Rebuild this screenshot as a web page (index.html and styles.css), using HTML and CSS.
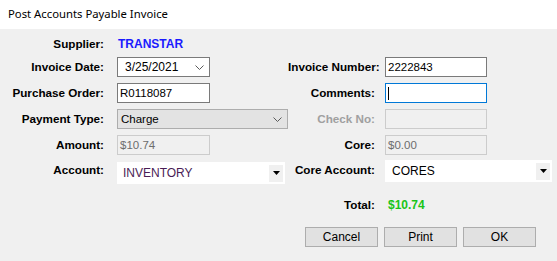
FILE: index.html
```html
<!DOCTYPE html>
<html lang="en">
<head>
    <meta charset="UTF-8">
    <title>Post Accounts Payable Invoice</title>
    <link rel="stylesheet" href="styles.css">
</head>
<body>
    <div class="window">
        <div class="titlebar">Post Accounts Payable Invoice</div>

        <div class="dialog">
            <div class="form-grid">
                <span class="lbl">Supplier:</span>
                <span class="supplier">TRANSTAR</span>
                <span></span>
                <span></span>

                <span class="lbl">Invoice Date:</span>
                <div class="field date-pick w-short">
                    <span class="val">3/25/2021</span>
                    <svg class="chev" width="9" height="5" viewBox="0 0 9 5"><path d="M0.5 0.5 L4.5 4.5 L8.5 0.5" fill="none" stroke="#5a5a5a" stroke-width="1"/></svg>
                </div>
                <span class="lbl lbl-right">Invoice Number:</span>
                <div class="field text-box w-right"><span class="val">2222843</span></div>

                <span class="lbl">Purchase Order:</span>
                <div class="field text-box w-short"><span class="val">R0118087</span></div>
                <span class="lbl lbl-right">Comments:</span>
                <div class="field text-box focused w-right"><span class="caret"></span></div>

                <span class="lbl">Payment Type:</span>
                <div class="field drop-list">
                    <span class="val">Charge</span>
                    <svg class="chev" width="9" height="5" viewBox="0 0 9 5"><path d="M0.5 0.5 L4.5 4.5 L8.5 0.5" fill="none" stroke="#5a5a5a" stroke-width="1"/></svg>
                </div>
                <span class="lbl lbl-right disabled-lbl">Check No:</span>
                <div class="field text-box disabled w-right"></div>

                <span class="lbl">Amount:</span>
                <div class="field text-box disabled w-short"><span class="val">$10.74</span></div>
                <span class="lbl lbl-right">Core:</span>
                <div class="field text-box disabled w-right"><span class="val">$0.00</span></div>

                <span class="lbl">Account:</span>
                <div class="field flat-combo account-combo">
                    <span class="val account-val">INVENTORY</span>
                    <span class="drop-btn"><svg width="7" height="4" viewBox="0 0 7 4"><path d="M0 0 H7 L3.5 4 Z" fill="#000"/></svg></span>
                </div>
                <span class="lbl lbl-right">Core Account:</span>
                <div class="field flat-combo core-combo">
                    <span class="val">CORES</span>
                    <span class="drop-btn"><svg width="7" height="4" viewBox="0 0 7 4"><path d="M0 0 H7 L3.5 4 Z" fill="#000"/></svg></span>
                </div>

                <span></span>
                <span></span>
                <span class="lbl lbl-right total-lbl">Total:</span>
                <span class="total">$10.74</span>
            </div>

            <div class="buttons">
                <button class="btn">Cancel</button>
                <button class="btn">Print</button>
                <button class="btn">OK</button>
            </div>
        </div>
    </div>
</body>
</html>
```

FILE: styles.css
```css
body {
    margin: 0;
    background-color: #f0f0f0;
    font-family: "Liberation Sans", Arial, sans-serif;
    font-size: 11.5px;
    color: #000;
}

.window {
    width: 557px;
    height: 261px;
    overflow: hidden;
}

.titlebar {
    height: 29px;
    background-color: #fff;
    font-family: "Noto Sans", "Open Sans", sans-serif;
    font-size: 11.3px;
    line-height: 28px;
    padding-left: 8px;
    box-sizing: border-box;
}

.dialog {
    padding-top: 7px;
}

.form-grid {
    display: grid;
    grid-template-columns: 117px 171px 97px 168px;
    grid-template-rows: 15px 20px 20px 20px 19px 23px 26px;
    row-gap: 6px;
}

.lbl {
    font-weight: bold;
    font-size: 11.7px;
    text-align: right;
    padding-right: 13px;
    line-height: 20px;
    white-space: nowrap;
}

.lbl-right {
    padding-right: 10px;
}

.disabled-lbl {
    color: #a0a0a0;
}

.supplier {
    color: #1a1aff;
    font-weight: bold;
    font-size: 12px;
    line-height: 16px;
    padding-left: 1px;
}

.form-grid > .lbl:first-child {
    line-height: 16px;
}

.field {
    box-sizing: border-box;
    height: 20px;
    display: flex;
    align-items: center;
    position: relative;
}

.w-short {
    width: 93px;
}

.w-right {
    width: 102px;
}

.text-box {
    background-color: #fff;
    border: 1px solid #7a7a7a;
    padding-left: 2px;
}

.text-box.focused {
    border-color: #0078d7;
}

.text-box.disabled {
    background-color: #f0f0f0;
    border-color: #cccccc;
    color: #6d6d6d;
}

.caret {
    display: block;
    width: 0;
    height: 13px;
    border-left: 1px solid #000;
}

.date-pick {
    background-color: #fff;
    border: 1px solid #7a7a7a;
    padding-left: 7px;
    justify-content: space-between;
    padding-right: 5px;
    font-size: 12px;
}

.drop-list {
    background-color: #e3e3e3;
    border: 1px solid #adadad;
    padding-left: 3px;
    padding-right: 5px;
    justify-content: space-between;
}

.flat-combo {
    background-color: #fff;
    height: 22px;
    justify-content: space-between;
    padding-right: 2px;
    font-size: 12px;
}

.account-combo {
    width: 168px;
    margin-top: 2px;
    padding-left: 6px;
}

.account-val {
    color: #4a1d55;
}

.core-combo {
    width: 167px;
    padding-left: 7px;
}

.drop-btn {
    width: 14px;
    height: 17px;
    background-color: #f0f0f0;
    display: flex;
    align-items: center;
    justify-content: center;
}

.total-lbl {
    align-self: end;
}

.total {
    align-self: end;
    line-height: 20px;
    color: #19c419;
    font-weight: bold;
    font-size: 12px;
    padding-left: 3px;
}

.buttons {
    display: flex;
    justify-content: flex-end;
    gap: 6px;
    padding-right: 21px;
    margin-top: 12px;
}

.btn {
    width: 73px;
    height: 20px;
    background-color: #e1e1e1;
    border: 1px solid #adadad;
    font-family: "Liberation Sans", Arial, sans-serif;
    font-size: 12px;
    color: #000;
    padding: 0;
    margin: 0;
}
```
